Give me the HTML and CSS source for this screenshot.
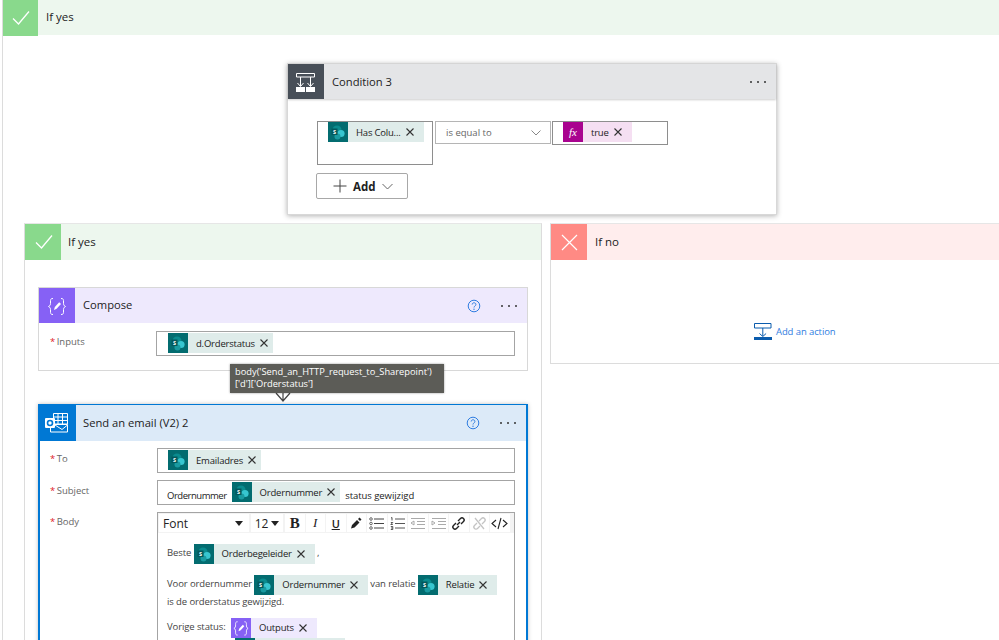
FILE: index.html
```html
<!DOCTYPE html>
<html lang="en">
<head>
  <meta charset="UTF-8">
  <title>Flow designer</title>
  <link rel="stylesheet" href="styles.css">
</head>
<body>

  <svg class="defs" width="0" height="0">
    <symbol id="sp" viewBox="0 0 20 20">
      <circle cx="9" cy="8" r="4.6" fill="#0b8b8e"/>
      <circle cx="13" cy="11.5" r="3.6" fill="#37c6d0"/>
      <circle cx="9.5" cy="14.5" r="3" fill="#1a9ba1"/>
      <rect x="3.5" y="6.5" width="6" height="6.5" fill="#03585c"/>
      <text x="6.5" y="11.6" class="sp-letter">S</text>
    </symbol>
    <symbol id="x" viewBox="0 0 10 10">
      <path d="M1.5 1.5l7 7M8.500 1.500l-7 7" fill="none" stroke="#333" stroke-width="1.100"/>
    </symbol>
    <symbol id="dots" viewBox="0 0 18 4">
      <circle cx="2" cy="2" r="1" fill="#333"/>
      <circle cx="9" cy="2" r="1" fill="#333"/>
      <circle cx="16" cy="2" r="1" fill="#333"/>
    </symbol>
    <symbol id="help" viewBox="0 0 14 14">
      <circle cx="7" cy="7" r="5.800" fill="none" stroke="#2f7de1" stroke-width="1"/>
      <path d="M5.200 5.500c0-2.300 3.700-2.300 3.700 0 0 1.500-1.900 1.500-1.900 3" fill="none" stroke="#2f7de1" stroke-width="1"/>
      <circle cx="7" cy="10.200" r=".7" fill="#2f7de1"/>
    </symbol>
    <symbol id="check" viewBox="0 0 36 36">
      <path d="M11 18.500l5.500 5.500L27 11.500" fill="none" stroke="#fff" stroke-width="1.300"/>
    </symbol>
    <symbol id="braces" viewBox="0 0 36 36">
      <path d="M14 10.500c-2.500 0-2.500 1-2.500 3.500s0 3.500-2 4.500c2 1 2 2 2 4.500s0 3.500 2.500 3.500M22 10.500c2.500 0 2.500 1 2.500 3.500s0 3.500 2 4.500c-2 1-2 2-2 4.500s0 3.500-2.500 3.500" fill="none" stroke="#fff" stroke-width="1"/>
      <path d="M15 22l.8-3 4.400-4.800 1.800 1.700-4.400 4.800z" fill="#fff"/>
    </symbol>
  </svg>

  <!-- outer yes branch -->
  <div class="branch branch-outer">
    <div class="branch-head head-yes head-outer">
      <span class="branch-icon icon-yes"><svg width="36" height="36"><use href="#check"/></svg></span>
      <span class="branch-title">If yes</span>
    </div>

    <!-- Condition card -->
    <div class="card card-condition">
      <div class="card-head head-condition">
        <span class="card-icon icon-condition">
          <svg width="36" height="35" viewBox="0 0 36 35">
            <path d="M8.500 9.500h18v3.500h-18zM12.500 13v9M22.500 13v9M9.500 19l3 3.500 3-3.500M19.500 19l3 3.500 3-3.500" fill="none" stroke="#fff" stroke-width="1"/>
            <rect x="8" y="23" width="9" height="5" fill="#fff"/>
            <rect x="18" y="23" width="9" height="5" fill="#fff"/>
          </svg>
        </span>
        <span class="card-title">Condition 3</span>
        <svg class="dots" width="18" height="4"><use href="#dots"/></svg>
      </div>
      <div class="condition-body">
        <div class="condition-row">
          <div class="box box-left">
            <span class="token"><svg class="tok-icon" width="20" height="20"><use href="#sp"/></svg><span class="tok-text">Has Colu...</span><svg class="tok-x" width="10" height="10"><use href="#x"/></svg></span>
          </div>
          <div class="box box-select">
            <span>is equal to</span>
            <svg width="10" height="6" viewBox="0 0 10 6"><path d="M.5.500l4.500 4.500 4.500-4.500" fill="none" stroke="#888" stroke-width="1"/></svg>
          </div>
          <div class="box box-value">
            <span class="token token-fx"><span class="fx-icon">fx</span><span class="tok-text">true</span><svg class="tok-x" width="10" height="10"><use href="#x"/></svg></span>
          </div>
        </div>
        <div class="add-btn">
          <svg width="14" height="14" viewBox="0 0 14 14"><path d="M7 .5v13M.5 7h13" stroke="#444" stroke-width="1"/></svg>
          <b>Add</b>
          <svg width="11" height="7" viewBox="0 0 11 7"><path d="M.5 1l5 5 5-5" fill="none" stroke="#666" stroke-width="1"/></svg>
        </div>
      </div>
    </div>

    <div class="branch-row">
      <!-- inner yes branch -->
      <div class="branch branch-yes">
        <div class="branch-head head-yes">
          <span class="branch-icon icon-yes"><svg width="36" height="36"><use href="#check"/></svg></span>
          <span class="branch-title">If yes</span>
        </div>

        <div class="branch-body">
          <div class="card card-compose">
            <div class="card-head head-compose">
              <span class="card-icon icon-compose"><svg width="36" height="36"><use href="#braces"/></svg></span>
              <span class="card-title title-up">Compose</span>
              <svg class="help" width="14" height="14"><use href="#help"/></svg>
              <svg class="dots" width="18" height="4"><use href="#dots"/></svg>
            </div>
            <div class="field field-compose">
              <label class="field-label"><i>*</i> Inputs</label>
              <div class="input">
                <span class="token"><svg class="tok-icon" width="20" height="20"><use href="#sp"/></svg><span class="tok-text">d.Orderstatus</span><svg class="tok-x" width="10" height="10"><use href="#x"/></svg></span>
              </div>
            </div>
            <div class="tooltip">body('Send_an_HTTP_request_to_Sharepoint')<br>['d']['Orderstatus']</div>
            <svg class="connector" width="16" height="11" viewBox="0 0 16 11"><path d="M1 1l7 8 7-8M8 0v9" fill="none" stroke="#444" stroke-width="1.200"/></svg>
          </div>

          <div class="card card-email">
            <div class="card-head head-email">
              <span class="card-icon icon-email">
                <svg width="36" height="36" viewBox="0 0 36 36">
                  <path d="M13.500 8.500h14v10.500h-14zM18 8.500v10.500M22.500 8.500v10.500M13.500 12h14M13.500 15.500h14" fill="none" stroke="#fff" stroke-width="1"/>
                  <path d="M10.500 19.500h17V27h-17z" fill="#0078d4" stroke="#fff" stroke-width="1"/>
                  <path d="M15 20l7 4.500 5.500-4.500" fill="none" stroke="#fff" stroke-width="1"/>
                  <rect x="5" y="13" width="10" height="10" rx="1" fill="#fff"/>
                  <circle cx="10" cy="18" r="2.500" fill="none" stroke="#0078d4" stroke-width="1.600"/>
                </svg>
              </span>
              <span class="card-title title-up">Send an email (V2) 2</span>
              <svg class="help" width="14" height="14"><use href="#help"/></svg>
              <svg class="dots" width="18" height="4"><use href="#dots"/></svg>
            </div>
            <div class="field field-to">
              <label class="field-label"><i>*</i> To</label>
              <div class="input">
                <span class="token"><svg class="tok-icon" width="20" height="20"><use href="#sp"/></svg><span class="tok-text">Emailadres</span><svg class="tok-x" width="10" height="10"><use href="#x"/></svg></span>
              </div>
            </div>
            <div class="field field-subject">
              <label class="field-label"><i>*</i> Subject</label>
              <div class="input input-subject">
                <span class="plain plain-tight">Ordernummer</span>
                <span class="token"><svg class="tok-icon" width="20" height="20"><use href="#sp"/></svg><span class="tok-text">Ordernummer</span><svg class="tok-x" width="10" height="10"><use href="#x"/></svg></span>
                <span class="plain">status gewijzigd</span>
              </div>
            </div>
            <div class="field field-body">
              <label class="field-label label-body"><i>*</i> Body</label>
              <div class="editor">
                <div class="toolbar">
                  <span class="tool tool-font">Font<i class="caret"></i></span>
                  <span class="tool tool-size">12<i class="caret"></i></span>
                  <span class="tool tool-b">B</span>
                  <span class="tool tool-i">I</span>
                  <span class="tool tool-u">U</span>
                  <span class="tool"><svg width="14" height="14" viewBox="0 0 14 14"><path d="M2 12.500l1-3.500 5-5 2.500 2.500-5 5zM9 3l1.500-1.500 2 2L11 5z" fill="#222"/></svg></span>
                  <span class="tool"><svg width="15" height="13" viewBox="0 0 15 13"><path d="M5 2h10M5 6.500h10M5 11h10" stroke="#444"/><circle cx="2" cy="2" r="1.300" fill="none" stroke="#444" stroke-width=".8"/><circle cx="2" cy="6.500" r="1.300" fill="none" stroke="#444" stroke-width=".8"/><circle cx="2" cy="11" r="1.300" fill="none" stroke="#444" stroke-width=".8"/></svg></span>
                  <span class="tool"><svg width="15" height="13" viewBox="0 0 15 13"><path d="M5 2h10M5 6.500h10M5 11h10M1 1l1-.5V3.500M.8 5.500h2l-2 2h2M.8 9.500h2v3h-2M1 11h1.500" stroke="#444" stroke-width=".9" fill="none"/></svg></span>
                  <span class="tool tool-off"><svg width="15" height="13" viewBox="0 0 15 13"><path d="M1 1.500h14M7 4.500h8M7 7.500h8M1 11.500h14M4 4L1 6l3 2z" stroke="#aaa" fill="none"/></svg></span>
                  <span class="tool tool-off"><svg width="15" height="13" viewBox="0 0 15 13"><path d="M1 1.500h14M7 4.500h8M7 7.500h8M1 11.500h14M1 4l3 2-3 2z" stroke="#aaa" fill="none"/></svg></span>
                  <span class="tool"><svg width="15" height="15" viewBox="0 0 15 15"><path d="M6 9l3-3M5 7L2.500 9.500a2 2 0 0 0 3 3L8 10M7 5l2.500-2.500a2 2 0 0 1 3 3L10 8" fill="none" stroke="#222" stroke-width="1.400"/></svg></span>
                  <span class="tool tool-off"><svg width="15" height="15" viewBox="0 0 15 15"><path d="M5 7L2.500 9.500a2 2 0 0 0 3 3L8 10M7 5l2.500-2.500a2 2 0 0 1 3 3L10 8M3 2l9 11" fill="none" stroke="#c4c4c4" stroke-width="1.300"/></svg></span>
                  <span class="tool"><svg width="17" height="13" viewBox="0 0 17 13"><path d="M5 3L1 6.500 5 10M12 3l4 3.500L12 10M10 1L7 12" fill="none" stroke="#222" stroke-width="1.100"/></svg></span>
                </div>
                <div class="editor-text">
                  <p>Beste <span class="token"><svg class="tok-icon" width="20" height="20"><use href="#sp"/></svg><span class="tok-text">Orderbegeleider</span><svg class="tok-x" width="10" height="10"><use href="#x"/></svg></span> ,</p>
                  <p>Voor ordernummer <span class="token"><svg class="tok-icon" width="20" height="20"><use href="#sp"/></svg><span class="tok-text">Ordernummer</span><svg class="tok-x" width="10" height="10"><use href="#x"/></svg></span> van relatie <span class="token"><svg class="tok-icon" width="20" height="20"><use href="#sp"/></svg><span class="tok-text">Relatie</span><svg class="tok-x" width="10" height="10"><use href="#x"/></svg></span><br>is de orderstatus gewijzigd.</p>
                  <p>Vorige status: <span class="token token-compose"><span class="compose-mini"><svg width="20" height="20" viewBox="6 6 24 24"><use href="#braces" width="36" height="36"/></svg></span><span class="tok-text">Outputs</span><svg class="tok-x" width="10" height="10"><use href="#x"/></svg></span></p>
                  <span class="token token-next"><svg class="tok-icon" width="20" height="20"><use href="#sp"/></svg></span>
                </div>
              </div>
            </div>
          </div>
        </div>
      </div>

      <!-- no branch -->
      <div class="branch branch-no">
        <div class="branch-head head-no">
          <span class="branch-icon icon-no">
            <svg width="36" height="36" viewBox="0 0 36 36"><path d="M11 11l15 15M26 11L11 26" stroke="#fff" stroke-width="1.200"/></svg>
          </span>
          <span class="branch-title">If no</span>
        </div>
        <div class="no-body">
          <svg width="18" height="17" viewBox="0 0 18 17">
            <path d="M.5.500h16.500v4.500H.5zM8.800 5v8M5.500 10.500l3.300 3 3.300-3" fill="none" stroke="#0b5cad" stroke-width="1"/>
            <rect x="0" y="14" width="18" height="3" fill="#0b5cad"/>
          </svg>
          <span class="add-action">Add an action</span>
        </div>
      </div>
    </div>
  </div>

</body>
</html>
```

FILE: styles.css
```css
html, body {
  margin: 0;
  height: 640px;
  overflow: hidden;
  background: #fff;
}

body {
  font-family: "Open Sans", "Noto Sans", sans-serif;
  font-size: 10.5px;
  color: #222;
}

.defs {
  display: none;
}

.sp-letter {
  font-size: 5.5px;
  font-weight: 700;
  fill: #fff;
  text-anchor: middle;
}

/* Branches */
.branch {
  border: 1px solid #dcdcdc;
  border-top-color: #e6e6e6;
  box-sizing: border-box;
}

.branch-outer {
  margin-left: 2px;
  width: 997px;
  height: 640px;
  overflow: hidden;
  border-width: 0 0 0 1px;
}

.branch-head {
  display: flex;
  align-items: center;
  height: 36px;
}

.head-outer {
  height: 35px;
  margin-left: -1px;
}

.head-yes { background: #edf7ee; }
.head-no { background: #ffeded; }

.branch-icon {
  display: block;
  width: 36px;
  height: 36px;
}

.icon-yes { background: #89d98c; }
.icon-no { background: #ff8a84; }

.branch-title {
  margin-left: 8px;
  padding-bottom: 2px;
  font-size: 11.5px;
  color: #222;
}

.branch-yes .branch-title {
  margin-left: 7px;
}

.branch-row {
  display: flex;
  align-items: flex-start;
  gap: 8px;
  margin: 8px 0 0 21px;
}

.branch-yes {
  flex: none;
  width: 518px;
  height: 600px;
}

.branch-no {
  flex: none;
  width: 520px;
  height: 141px;
}

.branch-body {
  padding: 27px 13px 0;
}

.no-body {
  display: flex;
  align-items: center;
  gap: 4px;
  padding: 63px 0 0 203px;
}

.add-action {
  color: #2f7de1;
  font-size: 9.500px;
  letter-spacing: -.1px;
}

/* Cards */
.card {
  position: relative;
  box-sizing: border-box;
  border: 1px solid #d8d8d8;
  background: #fff;
}

.card-head {
  display: flex;
  align-items: center;
  height: 35px;
}

.card-icon {
  display: block;
  width: 36px;
  height: 35px;
}

.card-title {
  flex: 1;
  margin-left: 8px;
  font-size: 11.2px;
  color: #222;
}

.title-up {
  padding-bottom: 2px;
}

.dots {
  margin-right: 9px;
}

.help {
  margin-right: 19px;
}

.card-condition {
  width: 490px;
  height: 152px;
  margin: 28px 0 0 284px;
  box-shadow: 0 1px 5px rgba(0, 0, 0, .3);
}

.head-condition { background: #e4e5e7; box-shadow: 0 1px 2px rgba(0, 0, 0, .2); }
.icon-condition { background: #484f58; }

.head-compose { background: #eee9fd; }
.icon-compose { background: #8661f5; }

.head-email { background: #dceaf8; height: 36px; }
.icon-email { background: #0078d4; height: 36px; }

.card-compose {
  height: 84px;
}

.card-email {
  margin-top: 33px;
  height: 300px;
  border: 2px solid #0078d4;
  border-bottom: 0;
  box-shadow: 0 0 4px rgba(0, 0, 0, .25);
}

.card-email .card-head {
  margin-top: -1px;
}

.card-email .card-title {
  margin-left: 7px;
}

/* Condition body */
.condition-body {
  padding: 22px 0 0 29px;
}

.condition-row {
  display: flex;
  align-items: flex-start;
}

.box {
  display: flex;
  align-items: flex-start;
  box-sizing: border-box;
  border: 1px solid #8e8e8e;
}

.box .token {
  padding-right: 9px;
}

.box-left {
  width: 116px;
  height: 44px;
  padding-left: 10px;
}

.box-select {
  align-items: center;
  justify-content: space-between;
  width: 116px;
  height: 23px;
  margin-left: 2px;
  padding: 0 9px 0 10px;
  border-color: #b5b5b5;
  color: #666;
  font-size: 9.500px;
}

.box-value {
  width: 116px;
  height: 24px;
  margin-left: 1px;
  padding-left: 10px;
}

.add-btn {
  display: flex;
  align-items: center;
  box-sizing: border-box;
  width: 92px;
  height: 26px;
  margin-top: 8px;
  margin-left: -1px;
  padding-left: 16px;
  border: 1px solid #a8a8a8;
  border-radius: 2px;
  gap: 6px;
  font-size: 11.500px;
}

/* Tokens */
.token {
  display: inline-flex;
  align-items: center;
  height: 20px;
  padding-right: 4px;
  background: #dfecea;
  vertical-align: -8px;
}

.tok-icon {
  background: #036c70;
  flex: none;
}

.tok-text {
  margin: 0 4px 0 8px;
  font-size: 9.500px;
  letter-spacing: -.2px;
  white-space: nowrap;
}

.tok-x {
  flex: none;
}

.token-fx {
  background: #f5dff2;
}

.fx-icon {
  display: block;
  width: 20px;
  height: 20px;
  background: #a9038f;
  color: #fff;
  font-family: "Liberation Serif", serif;
  font-style: italic;
  font-size: 11px;
  line-height: 20px;
  text-align: center;
}

.token-compose {
  margin-left: 3px;
  background: #eee9fd;
}

.compose-mini {
  display: block;
  width: 20px;
  height: 20px;
  background: #8661f5;
}

.token-next {
  display: flex;
  width: 101px;
  padding: 0;
  margin-left: 68px;
}

/* Form fields */
.field {
  display: flex;
  align-items: flex-start;
  padding-left: 11px;
}

.field-label {
  width: 106px;
  flex: none;
  padding-top: 4px;
  color: #666;
  font-size: 9.500px;
  line-height: 14px;
}

.label-body {
  padding-top: 3px;
}

.field-label i {
  margin-right: -1px;
  color: #e0202a;
  font-style: normal;
}

.field-compose { margin-top: 8px; }
.field-to { margin-top: 7px; padding-left: 10px; }
.field-subject { margin-top: 7px; padding-left: 10px; }
.field-body { margin-top: 7px; padding-left: 10px; }

.input {
  display: flex;
  align-items: flex-start;
  box-sizing: border-box;
  width: 359px;
  height: 25px;
  padding: 1px 0 0 11px;
  border: 1px solid #a4a4a4;
}

.card-email .input {
  width: 358px;
  margin-left: 1px;
  padding-left: 10px;
}

.card-email .input-subject {
  gap: 5px;
  padding-left: 9px;
}

.plain {
  align-self: center;
  padding-top: 5px;
  font-size: 9.500px;
  letter-spacing: -.05px;
}

.plain-tight {
  letter-spacing: -.47px;
}

/* Rich text editor */
.editor {
  box-sizing: border-box;
  width: 358px;
  height: 200px;
  margin-left: 1px;
  border: 1px solid #a4a4a4;
  border-bottom: 0;
}

.toolbar {
  display: flex;
  align-items: stretch;
  box-sizing: border-box;
  height: 20px;
  padding: 1px;
  gap: 1px;
  background: #f3f3f3;
}

.tool {
  display: flex;
  align-items: center;
  justify-content: center;
  width: 19.500px;
  background: #fff;
  color: #222;
  font-size: 12px;
}

.tool-font {
  justify-content: space-between;
  box-sizing: border-box;
  width: 90px;
  margin-right: 1px;
  padding: 0 6px 0 4px;
}

.tool-size {
  gap: 3px;
  width: 32px;
  margin-right: 1px;
}

.caret {
  width: 0;
  height: 0;
  border: 4px solid transparent;
  border-top: 5px solid #222;
  border-bottom: 0;
}

.tool-b {
  font-family: "Liberation Serif", serif;
  font-size: 15px;
  font-weight: 700;
}

.tool-i {
  font-family: "Liberation Serif", serif;
  font-size: 13px;
  font-style: italic;
}

.tool-u {
  font-size: 11px;
  font-weight: 600;
  text-decoration: underline;
}

.editor-text {
  padding: 11px 0 0 9px;
  font-size: 9.500px;
  letter-spacing: -.1px;
  color: #444;
}

.editor-text p {
  margin: 0 0 9px;
  line-height: 14px;
}

.editor-text p:first-child {
  margin-bottom: 11px;
}

.editor-text p:nth-child(3) {
  margin-bottom: 0;
}

.editor-text .token {
  padding-right: 9px;
}

.editor-text .tok-text {
  color: #222;
}

/* Tooltip over the connector */
.tooltip {
  position: absolute;
  left: 191px;
  top: 76px;
  z-index: 2;
  box-sizing: border-box;
  width: 214px;
  height: 29px;
  padding: 2px 5px;
  background: #5c5c57;
  box-shadow: 0 0 2px rgba(0, 0, 0, .4);
  color: #fff;
  font-size: 9.300px;
  line-height: 12px;
  white-space: nowrap;
}

.connector {
  position: absolute;
  left: 236px;
  top: 104px;
  z-index: 1;
}
```
